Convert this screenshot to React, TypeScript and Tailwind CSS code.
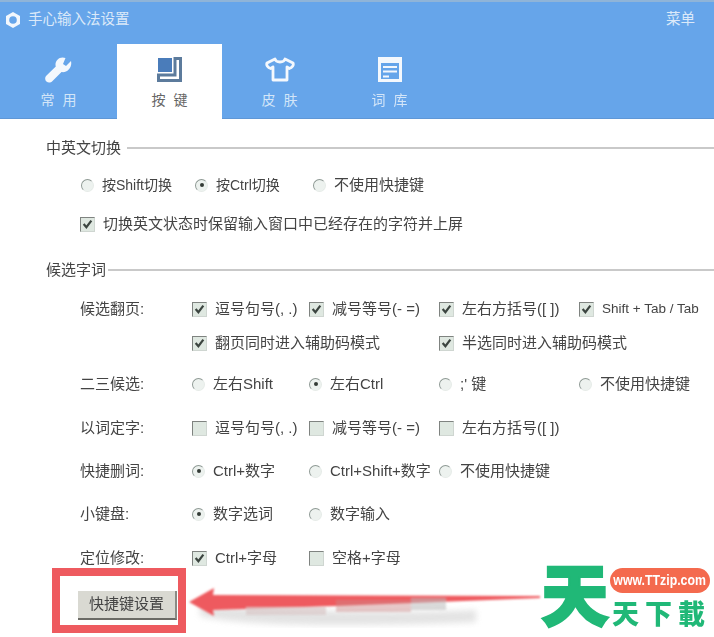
import React from "react";

const font = { fontFamily: '"Liberation Sans","Noto Sans CJK SC",sans-serif' };

function Radio({ on }: { on?: boolean }) {
  return (
    <span className="flex h-[13px] w-[13px] shrink-0 items-center justify-center rounded-full border border-[#8f9a95] border-r-[#e6ebe8] border-b-[#e6ebe8] bg-[#edf2ef]">
      {on && <span className="h-[4px] w-[4px] rounded-full bg-[#333b36]" />}
    </span>
  );
}

function Check({ on }: { on?: boolean }) {
  return (
    <span className="flex h-[15px] w-[15px] shrink-0 items-center justify-center border border-[#7f8380] border-r-[#cfd6d1] border-b-[#cfd6d1] bg-[#dfe8e1]">
      {on && (
        <svg width="11" height="11" viewBox="0 0 10 10" fill="none">
          <path d="M1.500 4.500 L4 7.500 L8.500 1.500" stroke="#3c4540" strokeWidth="2" />
        </svg>
      )}
    </span>
  );
}

function Opt({ kind, on, text, cls }: { kind: "r" | "c"; on?: boolean; text: string; cls?: string }) {
  return (
    <span className={"flex items-center gap-[8px] whitespace-nowrap text-[#444] " + (cls || "")}>
      {kind === "r" ? <Radio on={on} /> : <Check on={on} />}
      <span>{text}</span>
    </span>
  );
}

function Heading({ text, cls }: { text: string; cls: string }) {
  return (
    <div className={"flex items-center pl-[46px] text-[15px] leading-[24px] text-[#444] " + cls}>
      <span className="whitespace-nowrap">{text}</span>
      <span className="h-[2px] flex-1 bg-[#c9c9c9]" />
    </div>
  );
}

const rowCls = "grid h-[24px] grid-cols-[112px_117px_130px_140px_1fr] items-center pl-[80px] text-[15px] text-[#444]";

function Tab({ a, b, active, icon, w }: { a: string; b: string; active?: boolean; icon: React.ReactNode; w: string }) {
  return (
    <div className={"flex h-[75px] flex-col items-center pt-[13px] " + w + (active ? " bg-white text-[#666]" : " text-[#d3e5f8]")}>
      <div className="flex h-[25px] items-center justify-center">{icon}</div>
      <div className="mt-[10px] flex gap-[8px] text-[14px] leading-[16px]">
        <span>{a}</span>
        <span>{b}</span>
      </div>
    </div>
  );
}

export default function App() {
  return (
    <div className="relative h-[637px] w-[714px] overflow-hidden bg-white" style={font}>
      <div className="blur-[0.5px]">
        <header className="h-[119px] border-t-2 border-b border-t-[#8fb4d8] border-b-[#5f97d6] bg-[#66a5ea]">
          <div className="flex h-[42px] items-center pb-[6px] pl-[4px] pr-[19px] text-[14.500px] text-[#dbe9f9]">
            <svg width="18" height="18" viewBox="0 0 18 18" fill="none">
              <path d="M9 1 L16 5 V13 L9 17 L2 13 V5 Z" fill="#f2f7fd" />
              <circle cx="9" cy="9" r="3.800" fill="#66a5ea" />
            </svg>
            <span className="ml-[6px]">手心输入法设置</span>
            <span className="ml-auto">菜单</span>
          </div>
          <nav className="flex">
            <Tab
              a="常"
              b="用"
              w="w-[117px]"
              icon={
                <svg width="28" height="26" viewBox="0 0 28 26" fill="#f4f8fd">
                  <path d="M26 4 L21 9 L18 7 L20.500 1 C15 -1 10.500 3 10.500 7.500 C10.500 8.500 10.800 9.500 10.800 9.500 L1.500 18.500 C-0.500 20.500 0 23 1.500 24.500 C3.500 26.500 6 25.500 7.500 24 L16.500 15 C22 16 27.500 11 26 4 Z" />
                </svg>
              }
            />
            <Tab
              a="按"
              b="键"
              active
              w="w-[105px]"
              icon={
                <svg width="25" height="25" viewBox="0 0 25 25" fill="none">
                  <rect x="1" y="1" width="14" height="14" fill="#4a7cba" />
                  <path d="M18 1.500 H23.500 V23.500 H1.500 V18 H18 Z" stroke="#5c7b9c" strokeWidth="3" />
                </svg>
              }
            />
            <Tab
              a="皮"
              b="肤"
              w="w-[115px]"
              icon={
                <svg width="30" height="25" viewBox="0 0 30 25" fill="none" stroke="#f4f8fd" strokeWidth="2.800" strokeLinejoin="round">
                  <path d="M10 2 C11 6 19 6 20 2 L28 6 C29 8 27 11 24.500 11.500 L22 10 V23 H8 V10 L5.500 11.500 C3 11 1 8 2 6 Z" />
                </svg>
              }
            />
            <Tab
              a="词"
              b="库"
              w="w-[105px]"
              icon={
                <svg width="24" height="25" viewBox="0 0 24 25" fill="none">
                  <rect x="1.500" y="1.500" width="21" height="22" stroke="#f4f8fd" strokeWidth="3" />
                  <rect x="1" y="1" width="22" height="5" fill="#f4f8fd" />
                  <path d="M5 10 H19 M5 14.500 H19 M5 19.500 H11" stroke="#f4f8fd" strokeWidth="2" />
                </svg>
              }
            />
          </nav>
        </header>

        <Heading text="中英文切换" cls="mt-[17px] gap-[6px]" />
        <div className="mt-[13px] flex h-[24px] items-center pl-[81px] text-[15px]">
          <Opt kind="r" text="按Shift切换" cls="w-[114px] text-[14px]" />
          <Opt kind="r" on text="按Ctrl切换" cls="w-[118px] text-[14px]" />
          <Opt kind="r" text="不使用快捷键" />
        </div>
        <div className="mt-[15px] flex h-[24px] items-center pl-[80px] text-[15px]">
          <Opt kind="c" on text="切换英文状态时保留输入窗口中已经存在的字符并上屏" />
        </div>
        <Heading text="候选字词" cls="mt-[22px] gap-[2px]" />

        <div className={rowCls + " mt-[15px]"}>
          <span>候选翻页:</span>
          <Opt kind="c" on text="逗号句号(, .)" />
          <Opt kind="c" on text="减号等号(- =)" />
          <Opt kind="c" on text="左右方括号([ ])" />
          <Opt kind="c" on text="Shift + Tab / Tab" cls="text-[13.500px]" />
        </div>
        <div className={rowCls + " mt-[10px]"}>
          <Opt kind="c" on text="翻页同时进入辅助码模式" cls="col-span-2 col-start-2" />
          <Opt kind="c" on text="半选同时进入辅助码模式" cls="col-span-2" />
        </div>
        <div className={rowCls + " mt-[17px]"}>
          <span>二三候选:</span>
          <Opt kind="r" text="左右Shift" />
          <Opt kind="r" on text="左右Ctrl" />
          <Opt kind="r" text=";&#39; 键" />
          <Opt kind="r" text="不使用快捷键" />
        </div>
        <div className={rowCls + " mt-[20px]"}>
          <span>以词定字:</span>
          <Opt kind="c" text="逗号句号(, .)" />
          <Opt kind="c" text="减号等号(- =)" />
          <Opt kind="c" text="左右方括号([ ])" />
        </div>
        <div className={rowCls + " mt-[19px]"}>
          <span>快捷删词:</span>
          <Opt kind="r" on text="Ctrl+数字" />
          <Opt kind="r" text="Ctrl+Shift+数字" />
          <Opt kind="r" text="不使用快捷键" />
        </div>
        <div className={rowCls + " mt-[19px]"}>
          <span>小键盘:</span>
          <Opt kind="r" on text="数字选词" />
          <Opt kind="r" text="数字输入" />
        </div>
        <div className={rowCls + " mt-[20px]"}>
          <span>定位修改:</span>
          <Opt kind="c" on text="Ctrl+字母" />
          <Opt kind="c" text="空格+字母" />
        </div>

        <div className="ml-[52px] mt-[-2px] h-[65px] w-[134px] border-[8px] border-[#ee5a5f] pl-[18px] pt-[15px]">
          <button className="flex h-[29px] w-[99px] items-center justify-center border-r-2 border-b-2 border-r-[#8a8a84] border-b-[#6b6b66] bg-[#d9d9d2] text-[15px] text-[#444]">
            快捷键设置
          </button>
        </div>
      </div>

      <svg className="absolute left-[186px] top-[580px]" width="370" height="50" viewBox="0 0 370 50">
        <defs>
          <filter id="soft">
            <feGaussianBlur stdDeviation="3" />
          </filter>
          <filter id="softer">
            <feGaussianBlur stdDeviation="0.8" />
          </filter>
        </defs>
        <path d="M14 26 C80 30 220 34 290 30 L290 42 C200 46 60 48 14 36 Z" fill="#dcdcdc" filter="url(#soft)" opacity="0.8" />
        <g filter="url(#softer)">
          <path d="M3 22 L28 8 L27 15 L354 16 L354 18 L150 26 L27 30 L28 36 Z" fill="#ee5a5f" />
          <rect x="60" y="27" width="80" height="8" fill="#d8c8c8" opacity="0.7" />
          <rect x="150" y="20" width="75" height="12" fill="#c88" opacity="0.45" />
          <rect x="225" y="18" width="35" height="12" fill="#bbb" opacity="0.55" />
        </g>
      </svg>

      <div className="absolute left-[541px] top-[561px] text-[68px] font-black leading-[72px] text-[#20b877] [-webkit-text-stroke:2px_#20b877]">天</div>
      <div className="absolute left-[610px] top-[568px] flex h-[25px] w-[100px] items-center justify-center rounded-full bg-[#f46a4e] text-[14px] font-bold text-white">
        <span className="scale-x-[0.88] whitespace-nowrap">www.TTzip.com</span>
      </div>
      <div className="absolute left-[612px] top-[597px] flex gap-[6px] text-[27px] font-black leading-[36px] text-[#20b877]">
        <span>天</span>
        <span>下</span>
        <span>載</span>
      </div>
    </div>
  );
}
